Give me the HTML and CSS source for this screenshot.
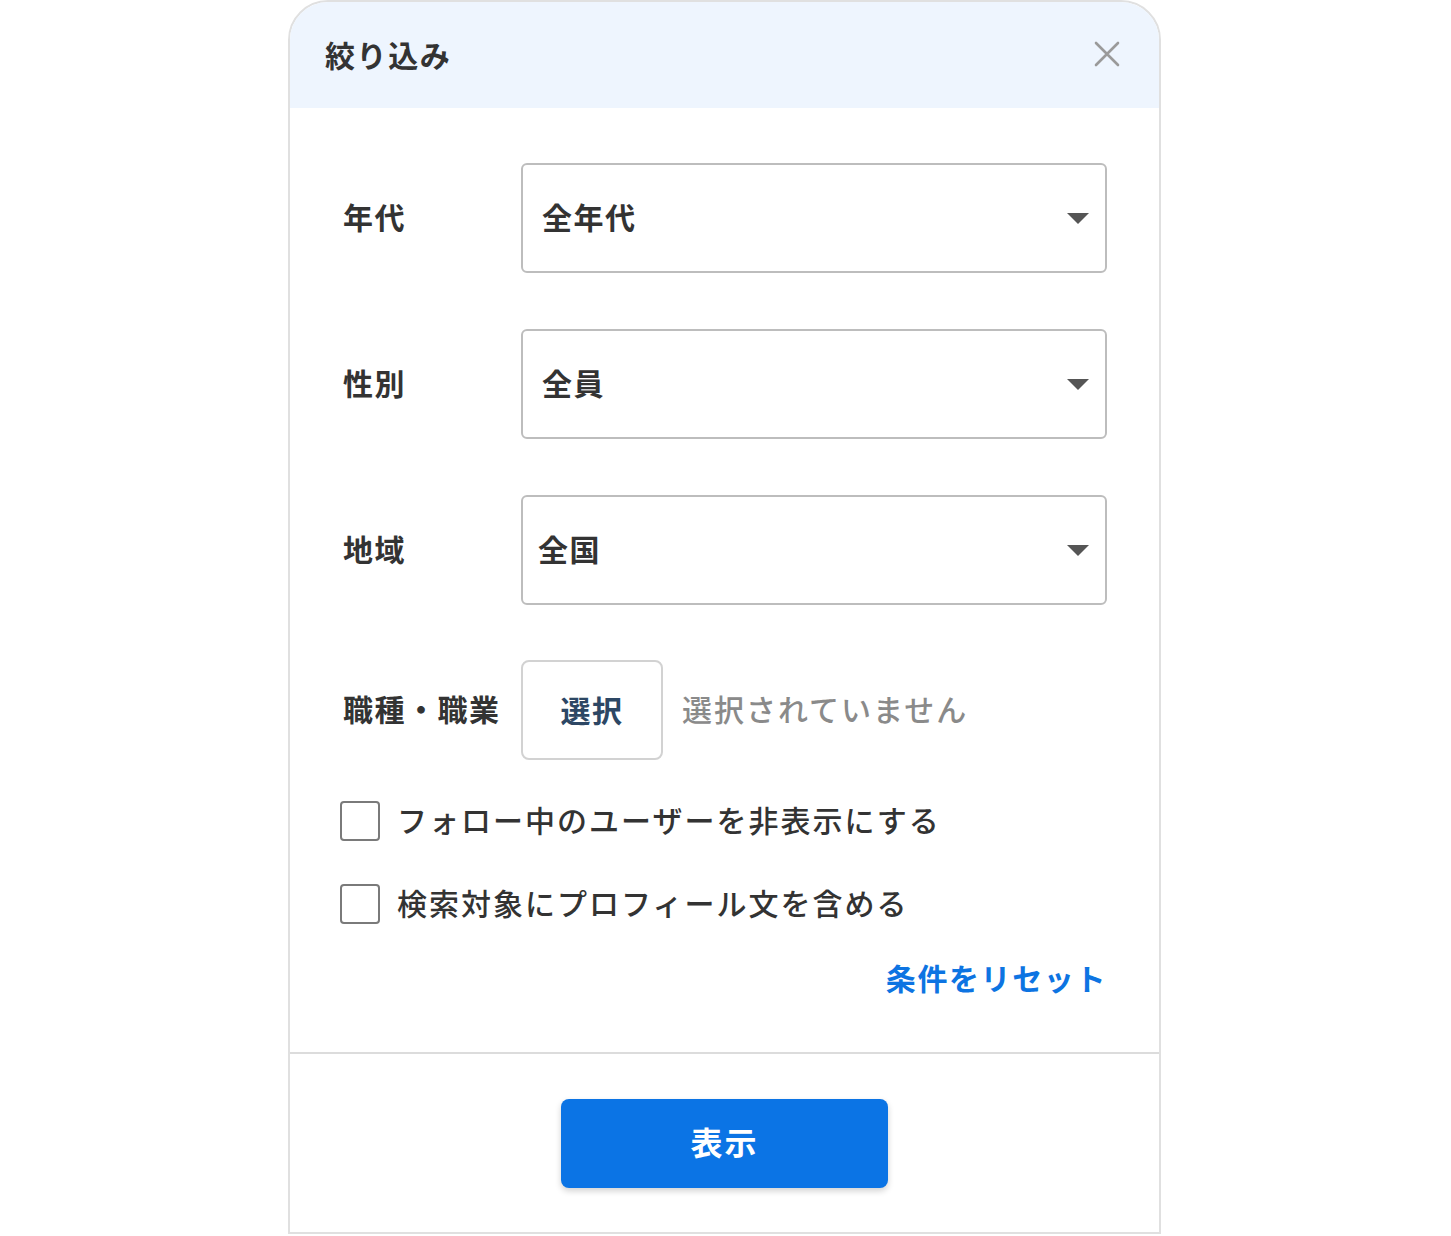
FILE: index.html
```html
<!DOCTYPE html>
<html lang="ja">
<head>
<meta charset="utf-8">
<title>絞り込み</title>
<link rel="stylesheet" href="styles.css">
</head>
<body>
<div class="panel">
  <div class="header">
    <div class="title">絞り込み</div>
    <svg class="close" width="26" height="26" viewBox="0 0 26 26"><path d="M2 2L24 24M24 2L2 24" stroke="#9a9a9a" stroke-width="2.6" stroke-linecap="round"/></svg>
  </div>
  <div class="body">
    <div class="row">
      <div class="label">年代</div>
      <div class="select"><span class="value">全年代</span><span class="arrow"></span></div>
    </div>
    <div class="row">
      <div class="label">性別</div>
      <div class="select"><span class="value">全員</span><span class="arrow"></span></div>
    </div>
    <div class="row">
      <div class="label">地域</div>
      <div class="select"><span class="value value-tight">全国</span><span class="arrow"></span></div>
    </div>
    <div class="row job-row">
      <div class="label">職種・職業</div>
      <div class="choose">選択</div>
      <div class="none">選択されていません</div>
    </div>
    <div class="check check-first">
      <span class="box"></span><span class="check-text">フォロー中のユーザーを非表示にする</span>
    </div>
    <div class="check check-second">
      <span class="box"></span><span class="check-text">検索対象にプロフィール文を含める</span>
    </div>
    <div class="reset-row"><span class="reset">条件をリセット</span></div>
  </div>
  <div class="footer">
    <div class="submit">表示</div>
  </div>
</div>
</body>
</html>
```
FILE: styles.css
```css
* { box-sizing: border-box; }
html, body { margin: 0; padding: 0; background: #fff; }
body {
  font-family: "Noto Sans CJK JP", "Noto Sans", sans-serif;
  color: #333;
}
.panel {
  width: 873px;
  height: 1234px;
  margin: 0 0 0 288px;
  border: 2px solid #e0e0e0;
  border-radius: 40px 40px 0 0;
  overflow: hidden;
  display: flex;
  flex-direction: column;
  background: #fff;
}
.header {
  height: 106px;
  background: #eef5fe;
  display: flex;
  align-items: center;
  justify-content: space-between;
  padding: 0 39px 0 35px;
  flex: none;
}
.title {
  font-size: 30px;
  font-weight: 700;
  letter-spacing: 1.6px;
  color: #333;
  margin-top: -3px;
}
.close { display: block; margin-top: -3px; }
.body {
  flex: 1;
  padding: 55px 52px 0 53px;
  display: flex;
  flex-direction: column;
}
.row {
  display: flex;
  align-items: center;
  margin-bottom: 56px;
}
.label {
  width: 178px;
  flex: none;
  font-size: 30px;
  font-weight: 700;
  letter-spacing: 1.5px;
  color: #333;
  margin-bottom: 4px;
}
.select {
  flex: 1;
  height: 110px;
  border: 2px solid #bdbdbd;
  border-radius: 6px;
  display: flex;
  align-items: center;
  justify-content: space-between;
  padding: 0 16px 0 19px;
}
.value {
  font-size: 30px;
  font-weight: 700;
  letter-spacing: 1.5px;
  color: #333;
  margin-bottom: 4px;
}
.value-tight { margin-left: -4px; }
.arrow {
  width: 0;
  height: 0;
  border-left: 11px solid transparent;
  border-right: 11px solid transparent;
  border-top: 11px solid #555;
}
.job-row { margin-bottom: 41px; margin-top: -1px; }
.choose {
  width: 142px;
  height: 100px;
  border: 2px solid #d2d2d2;
  border-radius: 8px;
  display: flex;
  align-items: center;
  justify-content: center;
  font-size: 30px;
  font-weight: 700;
  letter-spacing: 1.5px;
  color: #2d4764;
  flex: none;
  padding-bottom: 3px;
}
.none {
  margin-left: 19px;
  font-size: 30px;
  font-weight: 500;
  letter-spacing: 2px;
  color: #8a8a8a;
  margin-bottom: 4px;
}
.check {
  display: flex;
  align-items: center;
  height: 40px;
  margin-left: -3px;
}
.check-second { margin-top: 43px; }
.box {
  width: 40px;
  height: 40px;
  border: 2px solid #7a7a7a;
  border-radius: 4px;
  flex: none;
}
.check-text {
  display: block;
  margin-left: 17px;
  margin-top: -4px;
  font-size: 30px;
  line-height: 40px;
  font-weight: 500;
  letter-spacing: 2px;
  color: #333;
}
.reset-row {
  display: flex;
  justify-content: flex-end;
  margin-top: 38px;
  height: 30px;
  align-items: center;
}
.reset {
  font-size: 30px;
  line-height: 30px;
  font-weight: 700;
  letter-spacing: 1.6px;
  color: #0d74e2;
}
.footer {
  height: 180px;
  flex: none;
  border-top: 2px solid #dcdcdc;
  display: flex;
  justify-content: center;
  align-items: center;
  padding-top: 1px;
}
.submit {
  width: 327px;
  height: 89px;
  background: #0b74e5;
  border-radius: 8px;
  box-shadow: 0 3px 6px rgba(0,0,0,0.18);
  color: #fff;
  font-size: 32px;
  font-weight: 700;
  letter-spacing: 2px;
  display: flex;
  align-items: center;
  justify-content: center;
  padding-bottom: 5px;
}
```
